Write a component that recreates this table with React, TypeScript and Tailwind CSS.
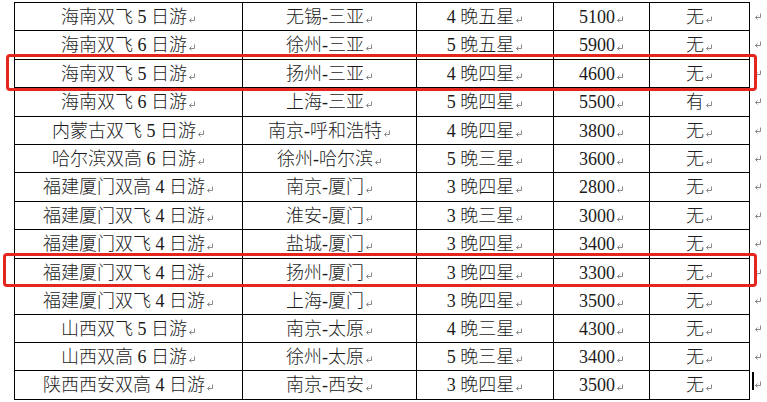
import React from 'react'

type Row = [string, string, string, string, string]

const rows: Row[] = [
  ['海南双飞 5 日游', '无锡-三亚', '4 晚五星', '5100', '无'],
  ['海南双飞 6 日游', '徐州-三亚', '5 晚五星', '5900', '无'],
  ['海南双飞 5 日游', '扬州-三亚', '4 晚四星', '4600', '无'],
  ['海南双飞 6 日游', '上海-三亚', '5 晚四星', '5500', '有'],
  ['内蒙古双飞 5 日游', '南京-呼和浩特', '4 晚四星', '3800', '无'],
  ['哈尔滨双高 6 日游', '徐州-哈尔滨', '5 晚三星', '3600', '无'],
  ['福建厦门双高 4 日游', '南京-厦门', '3 晚四星', '2800', '无'],
  ['福建厦门双飞 4 日游', '淮安-厦门', '3 晚三星', '3000', '无'],
  ['福建厦门双飞 4 日游', '盐城-厦门', '3 晚四星', '3400', '无'],
  ['福建厦门双飞 4 日游', '扬州-厦门', '3 晚四星', '3300', '无'],
  ['福建厦门双飞 4 日游', '上海-厦门', '3 晚四星', '3500', '无'],
  ['山西双飞 5 日游', '南京-太原', '4 晚三星', '4300', '无'],
  ['山西双高 6 日游', '徐州-太原', '5 晚三星', '3400', '无'],
  ['陕西西安双高 4 日游', '南京-西安', '3 晚四星', '3500', '无'],
]

// row heights incl. bottom border, so lines land where Word put them
const tall = [false, true, false, true, false, false, true, false, true, false, false, false, false, true]

const colClass = [
  'w-[228px]',
  'w-[174px]',
  'w-[137px]',
  'w-[96px]',
  'w-[100px]',
]

function ReturnMark() {
  return (
    <svg width="8" height="7" viewBox="0 0 8 7" className="inline-block shrink-0">
      <path d="M6.5 0.5 V4.5 H1.5" fill="none" stroke="#8a8a8a" strokeWidth="1" />
      <path d="M3.5 2.5 L1.5 4.5 L3.5 6.5" fill="none" stroke="#8a8a8a" strokeWidth="1" />
    </svg>
  )
}

export default function App() {
  return (
    <div
      className="relative w-[767px] h-[402px] overflow-hidden bg-white text-[#1c1c1c]"
      style={{ fontFamily: '"Liberation Serif", "Noto Sans CJK SC", serif' }}
    >
      <div className="pl-[14px] pt-[2px] flex">
        <div className="border-l border-t border-black">
          {rows.map((row, i) => (
            <div key={i} className={`flex ${tall[i] ? 'h-[29px]' : 'h-[28px]'}`}>
              {row.map((cell, j) => (
                <div
                  key={j}
                  className={`${colClass[j]} border-r border-b border-black flex items-center justify-center text-[18px] leading-none font-light`}
                >
                  <span>{cell}</span>
                  <span className="ml-[1px] mt-[5px] flex">
                    <ReturnMark />
                  </span>
                </div>
              ))}
            </div>
          ))}
        </div>
        <div className="pt-[1px]">
          {rows.map((_, i) => (
            <div
              key={i}
              className={`flex items-center pl-[4px] pb-[2px] ${tall[i] ? 'h-[29px]' : 'h-[28px]'}`}
            >
              <ReturnMark />
            </div>
          ))}
        </div>
      </div>

      {/* highlighted rows */}
      <div className="absolute left-[6px] top-[54px] w-[751px] h-[37px] border-[3px] border-[#e3261e] rounded-[4px]" />
      <div className="absolute left-[3px] top-[253px] w-[754px] h-[34px] border-[3px] border-[#e3261e] rounded-[4px]" />

      {/* text cursor */}
      <div className="absolute left-[752px] top-[372px] w-[2px] h-[18px] bg-black" />
    </div>
  )
}
